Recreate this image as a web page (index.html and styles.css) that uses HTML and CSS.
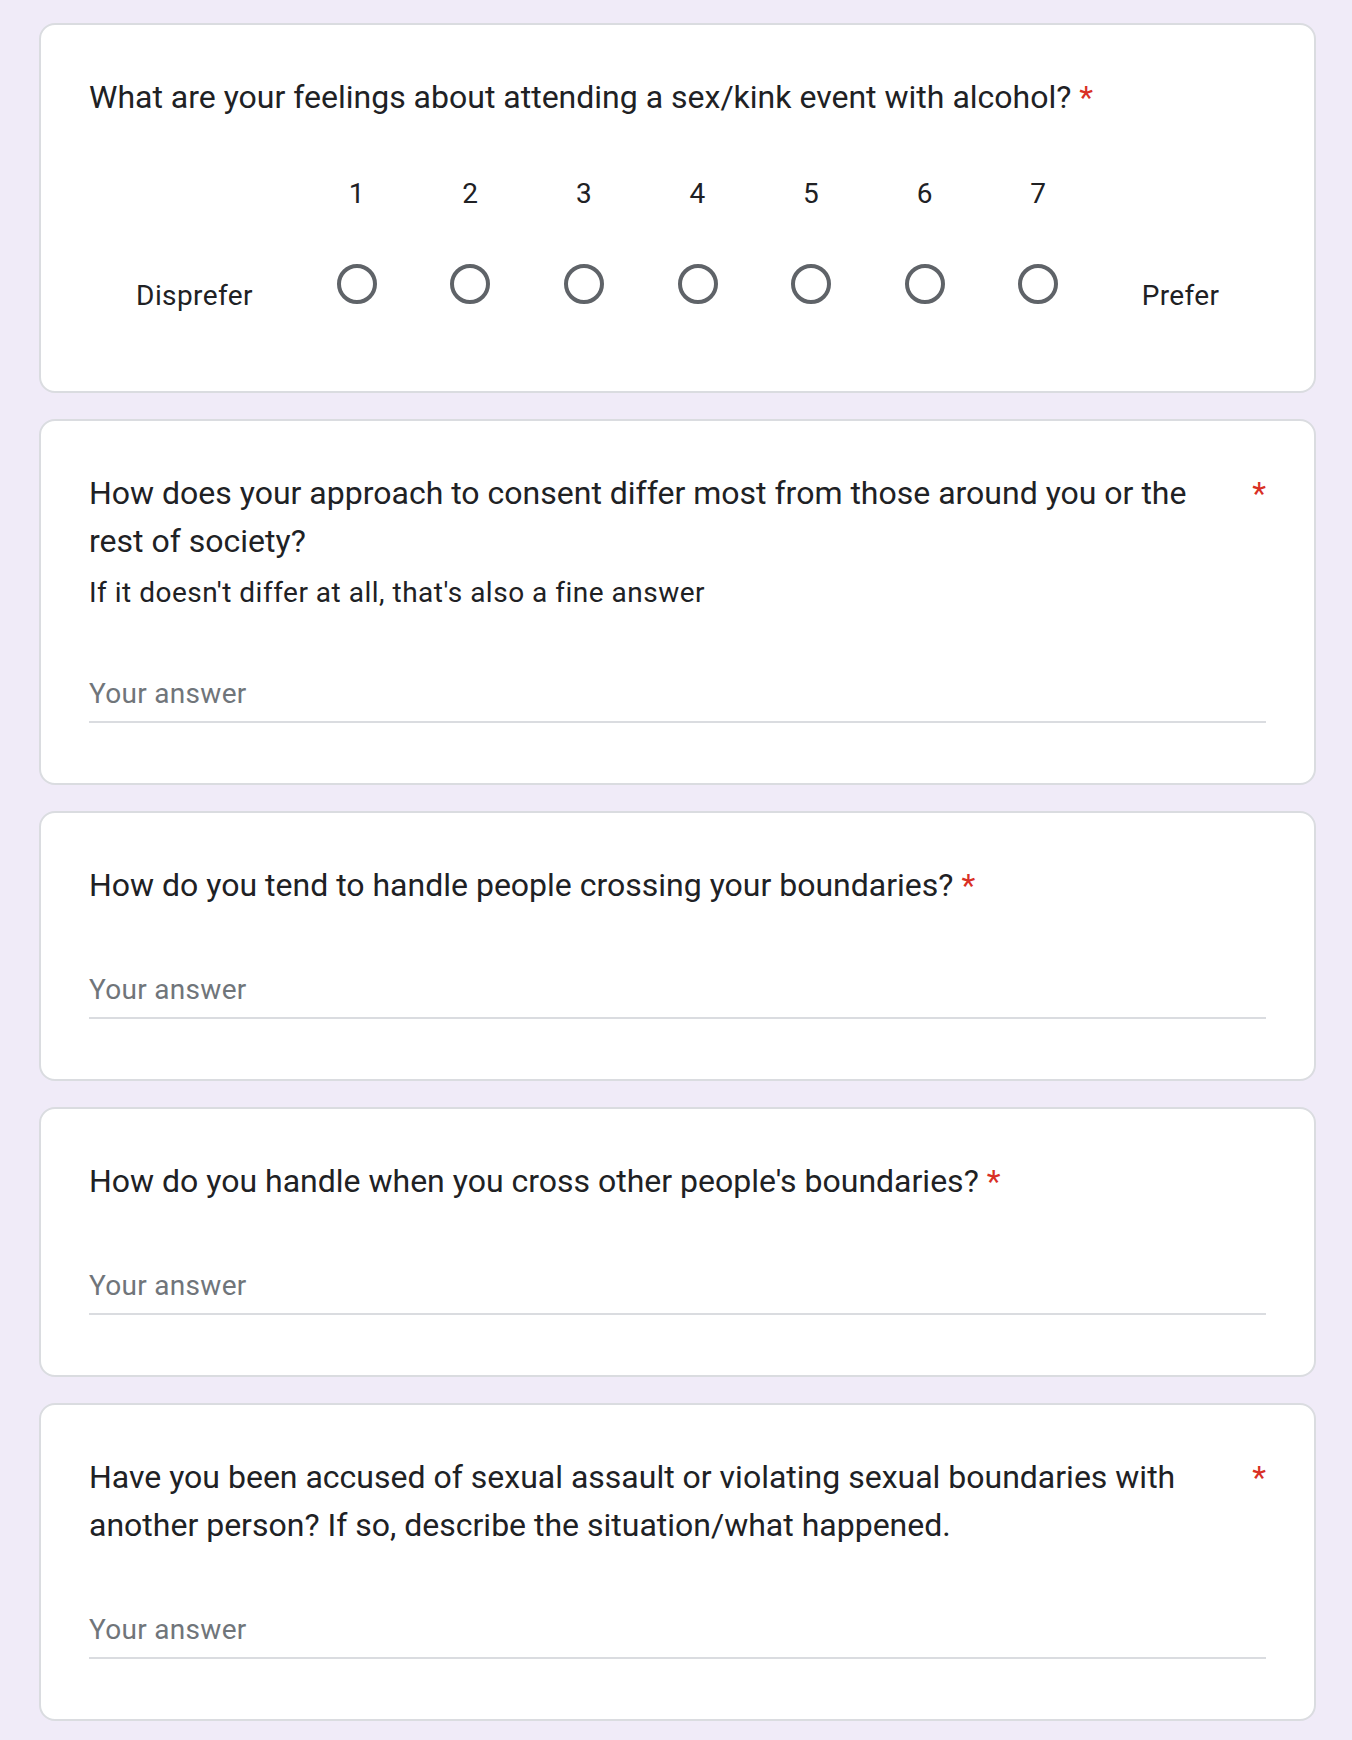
FILE: index.html
```html
<!DOCTYPE html>
<html lang="en">
<head>
<meta charset="utf-8">
<title>Form</title>
<link rel="stylesheet" href="styles.css">
</head>
<body>
<main class="form">
  <section class="card">
    <div class="heading"><div class="title">What are your feelings about attending a sex/kink event with alcohol?</div><span class="req">*</span></div>
    <div class="scale">
      <div class="scale-label left">Disprefer</div>
      <div class="opt"><div class="num">1</div><div class="radio"></div></div>
      <div class="opt"><div class="num">2</div><div class="radio"></div></div>
      <div class="opt"><div class="num">3</div><div class="radio"></div></div>
      <div class="opt"><div class="num">4</div><div class="radio"></div></div>
      <div class="opt"><div class="num">5</div><div class="radio"></div></div>
      <div class="opt"><div class="num">6</div><div class="radio"></div></div>
      <div class="opt"><div class="num">7</div><div class="radio"></div></div>
      <div class="scale-label right">Prefer</div>
    </div>
  </section>

  <section class="card">
    <div class="heading"><div class="title">How does your approach to consent differ most from those around you or the rest of society?</div><span class="req">*</span></div>
    <div class="desc">If it doesn't differ at all, that's also a fine answer</div>
    <div class="answer">Your answer</div>
  </section>

  <section class="card">
    <div class="heading"><div class="title">How do you tend to handle people crossing your boundaries?</div><span class="req">*</span></div>
    <div class="answer">Your answer</div>
  </section>

  <section class="card">
    <div class="heading"><div class="title">How do you handle when you cross other people's boundaries?</div><span class="req">*</span></div>
    <div class="answer">Your answer</div>
  </section>

  <section class="card">
    <div class="heading"><div class="title">Have you been accused of sexual assault or violating sexual boundaries with another person? If so, describe the situation/what happened.</div><span class="req">*</span></div>
    <div class="answer">Your answer</div>
  </section>
</main>
</body>
</html>
```

FILE: styles.css
```css
* { box-sizing: border-box; }
html, body {
  margin: 0;
  padding: 0;
  background: #f0ebf8;
}
body {
  font-family: Roboto, "Noto Sans", Arial, sans-serif;
  color: #202124;
}
.form {
  width: 1277px;
  margin-left: 39px;
  padding-top: 23px;
}
.card {
  background: #fff;
  border: 2px solid #dadce0;
  border-radius: 16px;
  padding: 48px;
  margin-bottom: 26px;
}
.heading {
  display: flex;
  font-size: 32px;
  line-height: 48px;
  letter-spacing: 0;
}
.title {
  flex: 0 1 auto;
}
.req {
  flex: 0 0 auto;
  color: #d93025;
  padding-left: 8px;
}
.desc {
  margin-top: 8px;
  font-size: 28px;
  line-height: 40px;
  letter-spacing: 0.5px;
}
.answer {
  margin-top: 65px;
  font-size: 28px;
  line-height: 32px;
  letter-spacing: 0.3px;
  color: #70757a;
  padding-bottom: 11px;
  border-bottom: 2px solid #dadce0;
  margin-bottom: 12px;
}
.scale {
  display: flex;
  margin-top: 53px;
  font-size: 28px;
  line-height: 40px;
  letter-spacing: 0.4px;
}
.scale-label {
  align-self: flex-end;
  padding-bottom: 27px;
  text-align: center;
}
.scale-label.left { width: 211px; }
.scale-label.right { flex: 1; }
.opt {
  width: 113.6px;
  display: flex;
  flex-direction: column;
  align-items: center;
  padding-bottom: 39px;
}
.radio {
  margin-top: 50px;
  width: 40px;
  height: 40px;
  border: 4px solid #5f6368;
  border-radius: 50%;
}
```
